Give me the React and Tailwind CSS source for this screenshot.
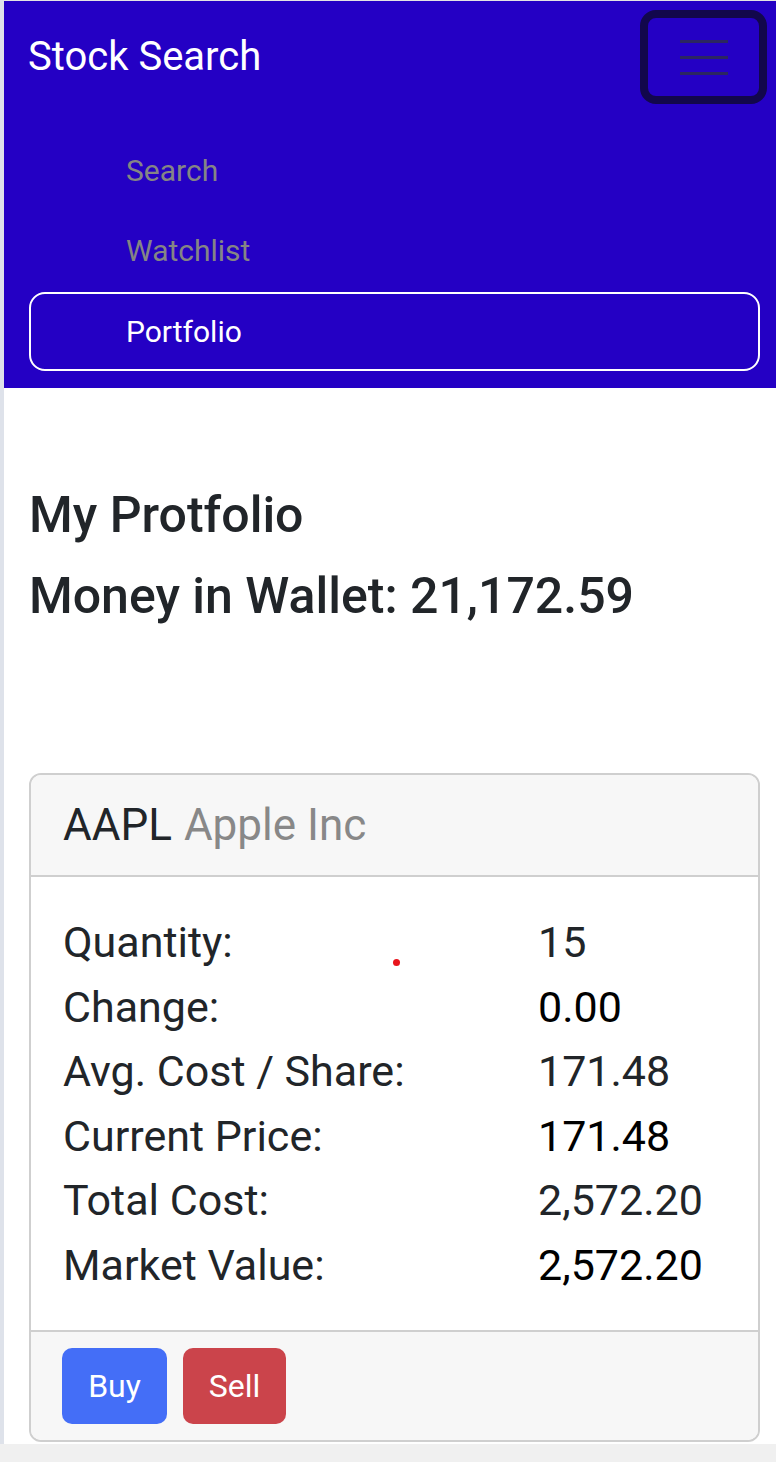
import React from "react";

const rows = [
  { label: "Quantity:", value: "15", tone: "text-[#212529]" },
  { label: "Change:", value: "0.00", tone: "text-black" },
  { label: "Avg. Cost / Share:", value: "171.48", tone: "text-[#212529]" },
  { label: "Current Price:", value: "171.48", tone: "text-black" },
  { label: "Total Cost:", value: "2,572.20", tone: "text-[#212529]" },
  { label: "Market Value:", value: "2,572.20", tone: "text-black" },
];

export default function App() {
  return (
    <div className="min-h-screen bg-[#f0f0f0] font-['Roboto',sans-serif]">
      <div className="border-l-4 border-t border-l-[#dee2ea] border-t-[#e4e4e4] bg-white pb-[2px]">
        <nav className="bg-[#2400c4] pb-[17px]">
          <div className="flex items-center justify-between pl-[24px] pr-[9px] pt-[9px]">
            <span className="text-[40px] leading-[1.5] text-white">Stock Search</span>
            <button className="flex h-[94px] w-[127px] flex-col items-center justify-center gap-[13px] rounded-[16px] border-[8px] border-[#12074c]">
              <span className="h-[3px] w-[48px] bg-[#2c2660]" />
              <span className="h-[3px] w-[48px] bg-[#2c2660]" />
              <span className="h-[3px] w-[48px] bg-[#2c2660]" />
            </button>
          </div>

          <div className="ml-[25px] mr-[16px] mt-[26px] text-[30px]">
            <div className="flex h-[80px] items-center pl-[97px] text-[#858585]">Search</div>
            <div className="flex h-[80px] items-center pl-[97px] text-[#858585]">Watchlist</div>
            <div className="mt-[2px] flex h-[79px] items-center rounded-[16px] border-2 border-white pl-[95px] text-white">
              Portfolio
            </div>
          </div>
        </nav>

        <main className="pl-[25px] pr-[16px] pt-[97px]">
          <h3 className="mb-[21px] text-[50px] font-medium leading-[60px] text-[#212529]">My Protfolio</h3>
          <h3 className="text-[50px] font-medium leading-[60px] text-[#212529]">Money in Wallet: 21,172.59</h3>

          <div className="mt-[147px] overflow-hidden rounded-[12px] border-2 border-[#cfcfcf]">
            <div className="flex h-[102px] items-center border-b-2 border-[#cfcfcf] bg-[#f7f7f7] px-[32px] text-[44px] leading-[1.2]">
              <span className="text-[#212529]">AAPL</span>
              <span className="ml-[12px] text-[#888888]">Apple Inc</span>
            </div>

            <div className="relative px-[32px] py-[33px] text-[43px] leading-[1.5]">
              {rows.map((r) => (
                <div key={r.label} className="grid grid-cols-[475px_1fr]">
                  <span className="text-[#212529]">{r.label}</span>
                  <span className={r.tone}>{r.value}</span>
                </div>
              ))}
              <span className="absolute left-[362px] top-[82px] h-[7px] w-[7px] rounded-full bg-[#e8141c]" />
            </div>

            <div className="flex gap-[16px] border-t-2 border-[#cfcfcf] bg-[#f7f7f7] px-[31px] py-[16px]">
              <button className="h-[76px] w-[105px] rounded-[10px] bg-[#446ef7] text-[32px] text-white">Buy</button>
              <button className="h-[76px] w-[103px] rounded-[10px] bg-[#cb444b] text-[32px] text-white">Sell</button>
            </div>
          </div>
        </main>
      </div>
    </div>
  );
}
